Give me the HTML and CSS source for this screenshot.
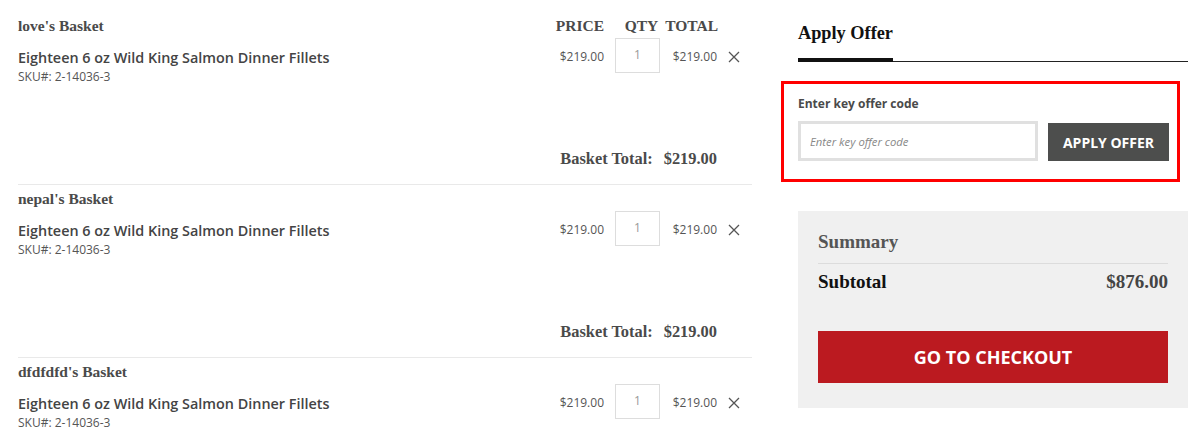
FILE: index.html
```html
<!DOCTYPE html>
<html lang="en">
<head>
<meta charset="utf-8">
<title>Cart</title>
<link rel="stylesheet" href="styles.css">
</head>
<body>
<div class="page">
  <div class="baskets">
    <section class="basket">
      <div class="basket-head">
        <h2 class="basket-title">love's Basket</h2>
        <div class="col-head price">PRICE</div>
        <div class="col-head qty">QTY</div>
        <div class="col-head total">TOTAL</div>
        <div class="x-space"></div>
      </div>
      <div class="item">
        <div class="item-info">
          <div class="item-name">Eighteen 6 oz Wild King Salmon Dinner Fillets</div>
          <div class="item-sku">SKU#: 2-14036-3</div>
        </div>
        <div class="cell price">$219.00</div>
        <div class="qty-box">1</div>
        <div class="cell total">$219.00</div>
        <div class="remove"><svg width="12" height="12" viewBox="0 0 12 12"><path d="M1 1L11 11M11 1L1 11" stroke="#555" stroke-width="1.3" fill="none"/></svg></div>
      </div>
      <div class="basket-total"><span>Basket Total:</span><span>$219.00</span></div>
    </section>
    <section class="basket">
      <div class="basket-head">
        <h2 class="basket-title">nepal's Basket</h2>
      </div>
      <div class="item">
        <div class="item-info">
          <div class="item-name">Eighteen 6 oz Wild King Salmon Dinner Fillets</div>
          <div class="item-sku">SKU#: 2-14036-3</div>
        </div>
        <div class="cell price">$219.00</div>
        <div class="qty-box">1</div>
        <div class="cell total">$219.00</div>
        <div class="remove"><svg width="12" height="12" viewBox="0 0 12 12"><path d="M1 1L11 11M11 1L1 11" stroke="#555" stroke-width="1.3" fill="none"/></svg></div>
      </div>
      <div class="basket-total"><span>Basket Total:</span><span>$219.00</span></div>
    </section>
    <section class="basket last">
      <div class="basket-head">
        <h2 class="basket-title">dfdfdfd's Basket</h2>
      </div>
      <div class="item">
        <div class="item-info">
          <div class="item-name">Eighteen 6 oz Wild King Salmon Dinner Fillets</div>
          <div class="item-sku">SKU#: 2-14036-3</div>
        </div>
        <div class="cell price">$219.00</div>
        <div class="qty-box">1</div>
        <div class="cell total">$219.00</div>
        <div class="remove"><svg width="12" height="12" viewBox="0 0 12 12"><path d="M1 1L11 11M11 1L1 11" stroke="#555" stroke-width="1.3" fill="none"/></svg></div>
      </div>
    </section>
  </div>
  <aside class="side">
    <div class="tabs"><div class="tab">Apply Offer</div></div>
    <div class="offer-box">
      <label class="offer-label">Enter key offer code</label>
      <div class="offer-row">
        <input class="offer-input" type="text" placeholder="Enter key offer code">
        <button class="offer-btn">APPLY OFFER</button>
      </div>
    </div>
    <div class="summary">
      <div class="summary-title">Summary</div>
      <div class="subtotal"><span class="sub-label">Subtotal</span><span class="sub-value">$876.00</span></div>
      <button class="checkout">GO TO CHECKOUT</button>
    </div>
  </aside>
</div>
</body>
</html>
```
FILE: styles.css
```css
* { box-sizing: border-box; }
html, body { margin: 0; padding: 0; background: #fff; }
body { font-family: "Open Sans", "Liberation Sans", sans-serif; color: #444; overflow: hidden; }

.page { display: flex; padding-left: 18px; }

.baskets { width: 734px; padding-top: 15px; }
.basket { border-bottom: 1px solid #e9e9e9; padding-bottom: 15px; margin-bottom: 3px; }
.basket.last { border-bottom: 0; padding-bottom: 0; }

.basket-head { display: flex; align-items: center; height: 20px; padding-top: 1px; }
.basket-title { flex: 1; margin: 0; font-family: "Liberation Serif", serif; font-weight: bold; font-size: 15.5px; line-height: 20px; color: #4a4a4a; }
.col-head { font-family: "Liberation Serif", serif; font-weight: bold; font-size: 15.5px; line-height: 20px; color: #4a4a4a; }
.col-head.price { width: 60px; text-align: right; }
.col-head.qty { width: 45px; margin-left: 11px; padding-left: 8px; text-align: center; }
.col-head.total { width: 58px; text-align: right; }
.x-space { width: 34px; }

.item { display: flex; align-items: flex-start; margin-top: 3px; }
.item-info { flex: 1; padding-top: 9px; }
.item-name { font-size: 14.4px; font-weight: 600; line-height: 21px; color: #444; }
.item-sku { font-size: 12px; line-height: 17px; color: #555; }
.cell { font-size: 12px; line-height: 37px; color: #555; }
.cell.price { width: 60px; text-align: right; }
.cell.total { width: 57px; text-align: right; }
.qty-box { width: 45px; height: 35px; margin-left: 11px; border: 1px solid #ddd; font-size: 12px; line-height: 31px; text-align: center; color: #999; }
.remove { width: 12px; height: 35px; margin-left: 11px; margin-right: 12px; display: flex; align-items: center; padding-top: 3px; }

.basket-total { display: flex; justify-content: flex-end; gap: 11px; margin-top: 64px; padding-right: 35px; font-family: "Liberation Serif", serif; font-weight: bold; font-size: 16.4px; line-height: 20px; color: #4a4a4a; }

.side { width: 407px; margin-left: 29px; padding-top: 22px; }
.tabs { margin-left: 17px; border-bottom: 1px solid #222; }
.tab { display: inline-block; font-family: "Liberation Serif", serif; font-weight: bold; font-size: 18.3px; line-height: 22px; color: #111; padding-bottom: 14px; border-bottom: 4px solid #111; margin-bottom: -1px; }

.offer-box { width: 399px; margin-top: 19px; border: 3px solid #f00; padding: 12px 8px 18px 14px; }
.offer-label { display: block; font-size: 12px; font-weight: 700; line-height: 16px; color: #4a4a4a; }
.offer-row { display: flex; align-items: flex-end; gap: 10px; margin-top: 9px; }
.offer-input { width: 240px; height: 40px; border: 3px solid #e0e0e0; padding: 0 9px; font-family: "Open Sans", sans-serif; font-size: 11.3px; font-style: italic; color: #444; outline: none; }
.offer-input::placeholder { color: #888; font-style: italic; }
.offer-btn { width: 121px; height: 38px; border: 0; background: #4d4e4d; color: #fff; font-family: "Open Sans", sans-serif; font-weight: 700; font-size: 14px; padding: 0; }

.summary { width: 390px; margin-left: 17px; margin-top: 29px; background: #f0f0f0; padding: 20px 20px 25px; }
.summary-title { font-family: "Liberation Serif", serif; font-weight: bold; font-size: 19px; line-height: 22px; color: #555; padding-bottom: 10px; border-bottom: 1px solid #dcdcdc; }
.subtotal { display: flex; justify-content: space-between; margin-top: 6px; font-family: "Liberation Serif", serif; font-weight: bold; font-size: 19px; line-height: 24px; }
.sub-label { color: #111; }
.sub-value { color: #444; }
.checkout { display: block; width: 100%; height: 52px; margin-top: 37px; border: 0; background: #bb1a20; color: #fff; font-family: "Open Sans", sans-serif; font-weight: 700; font-size: 18px; padding: 0; }
```
